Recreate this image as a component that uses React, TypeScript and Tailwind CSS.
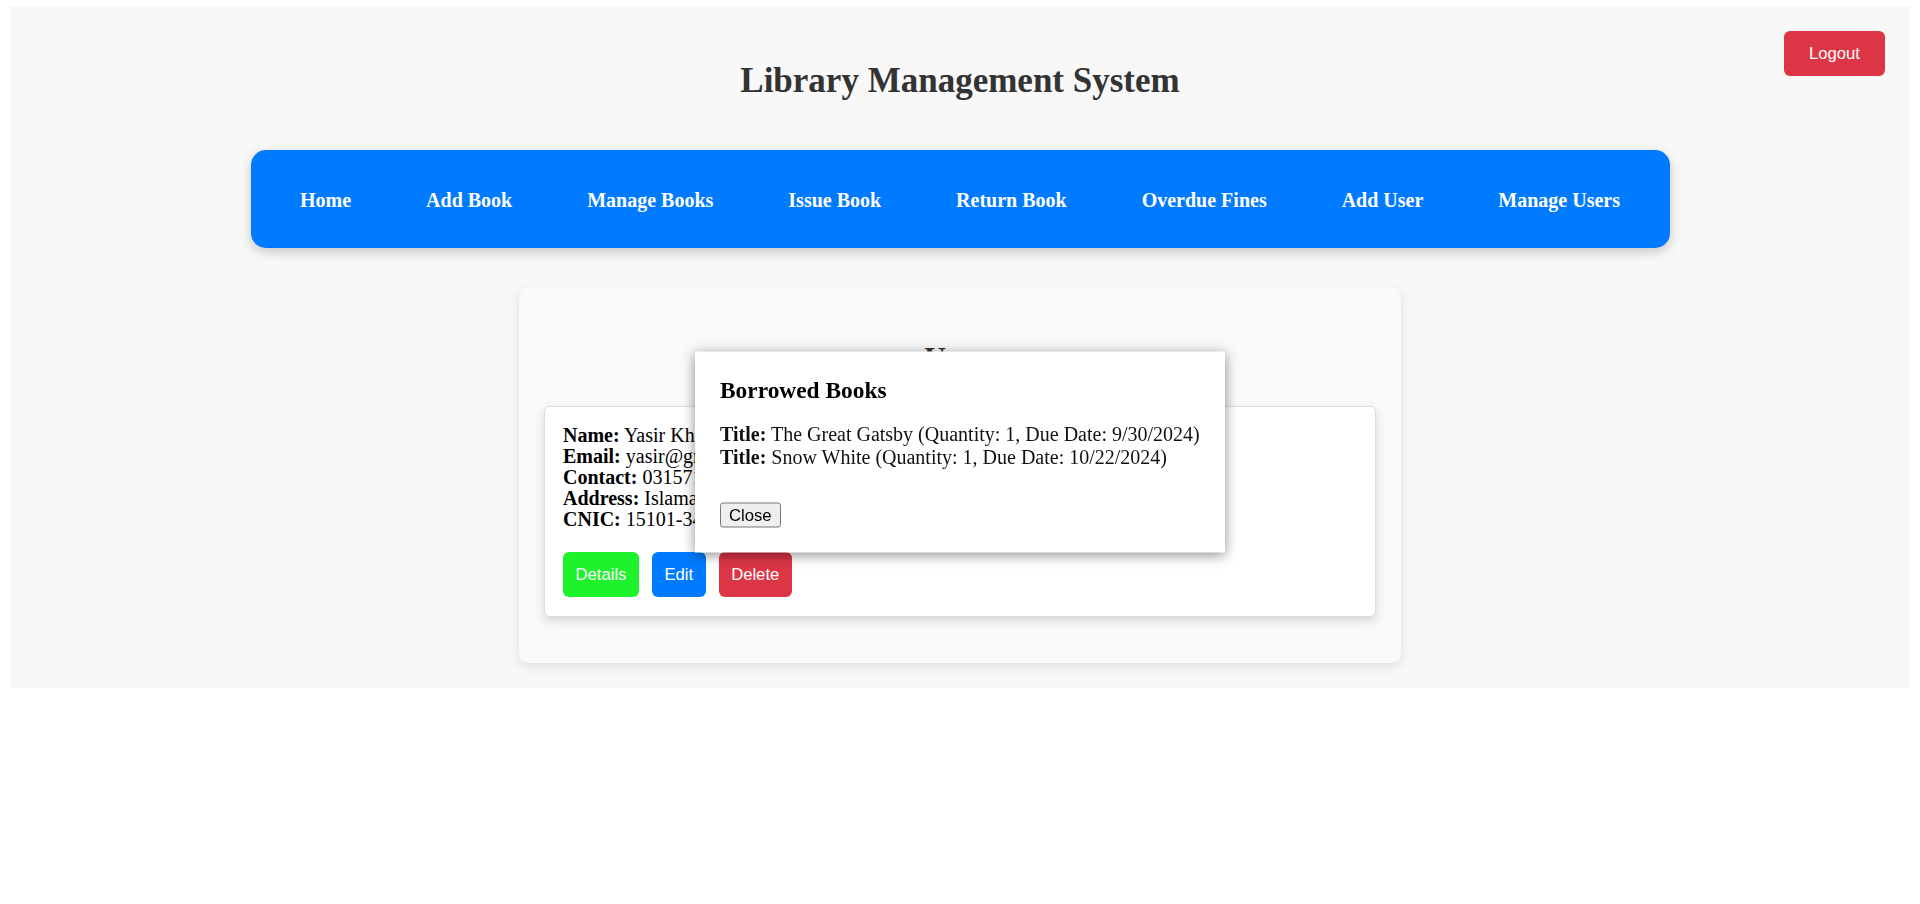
import { useState } from "react"

const navItems = [
  "Home",
  "Add Book",
  "Manage Books",
  "Issue Book",
  "Return Book",
  "Overdue Fines",
  "Add User",
  "Manage Users",
]

const borrowed = [
  { title: "The Great Gatsby", quantity: 1, due: "9/30/2024" },
  { title: "Snow White", quantity: 1, due: "10/22/2024" },
]

function UserCard({ onDetails }: { onDetails: () => void }) {
  return (
    <div className="mt-[32px] mb-[21px] rounded-[6px] border border-[#ddd] bg-white px-[18px] pt-[18px] pb-[19px] shadow-[0_4px_10px_rgba(0,0,0,0.15)]">
      <div className="text-[20px] leading-[21px] text-black">
        <div>
          <b>Name:</b> Yasir Khan
        </div>
        <div>
          <b>Email:</b> yasir@gmail.com
        </div>
        <div>
          <b>Contact:</b> 03157123456
        </div>
        <div>
          <b>Address:</b> Islamabad
        </div>
        <div>
          <b>CNIC:</b> 15101-3456789-1
        </div>
      </div>
      <div className="mt-[22px] flex gap-[13px] font-['Liberation_Sans',Arial,sans-serif] text-[16.67px] text-white">
        <button onClick={onDetails} className="flex h-[45px] items-center rounded-[6px] bg-[#1ef22d] px-[12.5px]">
          Details
        </button>
        <button className="flex h-[45px] items-center rounded-[6px] bg-[#007bff] px-[12.5px]">Edit</button>
        <button className="flex h-[45px] items-center rounded-[6px] bg-[#dc3545] px-[12.5px]">Delete</button>
      </div>
    </div>
  )
}

export default function App() {
  const [open, setOpen] = useState(true)

  return (
    <div className="min-h-screen bg-white font-['Liberation_Serif','Times_New_Roman',serif]">
      <div className="mx-[10px] mt-[6px] bg-[#f8f8f8] pb-[25px]">
        <header className="grid grid-cols-[1fr_auto_1fr]">
          <div />
          <h1 className="mt-[55px] text-[35px] leading-[40px] font-bold text-[#333]">Library Management System</h1>
          <div className="flex items-start justify-end pt-[25px] pr-[25px]">
            <button className="flex h-[45px] items-center rounded-[6px] bg-[#dc3545] px-[25px] font-['Liberation_Sans',Arial,sans-serif] text-[16.67px] text-white">
              Logout
            </button>
          </div>
        </header>

        <nav className="mx-auto mt-[49px] flex h-[98px] w-[1419px] items-center justify-around rounded-[15px] bg-[#007bff] px-[12px] shadow-[0_4px_12px_rgba(0,0,0,0.2)]">
          {navItems.map((item) => (
            <a key={item} href="#" className="mt-[2px] text-[20px] leading-[23px] font-bold text-white">
              {item}
            </a>
          ))}
        </nav>

        <main className="mx-auto mt-[39px] w-[882px] rounded-[10px] bg-[#f9f9f9] p-[25px] shadow-[0_4px_12px_rgba(0,0,0,0.1)]">
          <h2 className="mt-[28px] text-center text-[30px] leading-[34px] font-bold text-[#333]">Users</h2>
          <UserCard onDetails={() => setOpen(true)} />
        </main>
      </div>

      {open && (
        <div className="fixed top-1/2 left-1/2 w-[530px] -translate-x-1/2 -translate-y-1/2 bg-white p-[25px] shadow-[0_2px_12px_rgba(0,0,0,0.45)]">
          <h3 className="text-[23.4px] leading-[27px] font-bold text-black">Borrowed Books</h3>
          <div className="mt-[19px] text-[20px] leading-[23px] text-[#111]">
            {borrowed.map((b) => (
              <div key={b.title}>
                <b>Title:</b> {b.title} (Quantity: {b.quantity}, Due Date: {b.due})
              </div>
            ))}
          </div>
          <button
            onClick={() => setOpen(false)}
            className="mt-[34px] flex h-[25px] items-center rounded-[3px] border border-[#767676] bg-[#efefef] px-[8px] font-['Liberation_Sans',Arial,sans-serif] text-[16.67px] text-black"
          >
            Close
          </button>
        </div>
      )}
    </div>
  )
}
